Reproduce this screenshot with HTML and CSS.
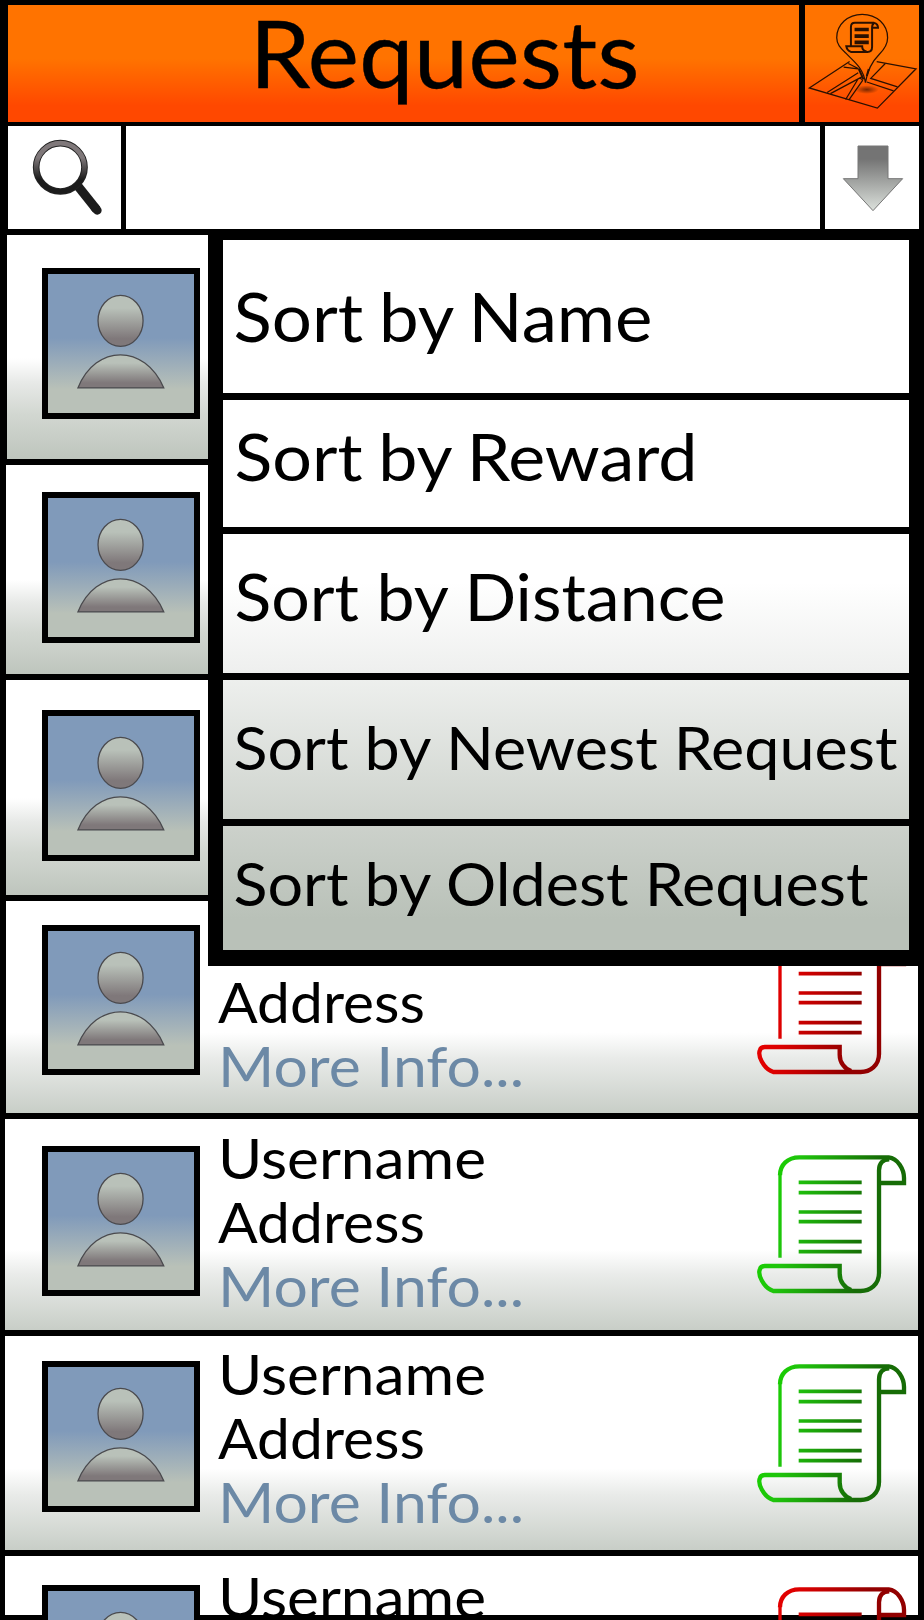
FILE: index.html
```html
<!DOCTYPE html>
<html lang="en">
<head>
<meta charset="utf-8">
<title>Requests</title>
<link rel="stylesheet" href="styles.css">
</head>
<body>
<svg class="defs" aria-hidden="true">
  <defs>
    <linearGradient id="skin" x1="0" y1="0" x2="0" y2="1"><stop offset=".25" stop-color="#b9c1b9"/><stop offset=".85" stop-color="#7f787a"/></linearGradient>
    <linearGradient id="green" gradientUnits="userSpaceOnUse" x1="130" y1="0" x2="440" y2="60"><stop offset="0" stop-color="#18d000"/><stop offset=".25" stop-color="#1fc40c"/><stop offset="1" stop-color="#166c06"/></linearGradient>
    <linearGradient id="red" gradientUnits="userSpaceOnUse" x1="130" y1="0" x2="440" y2="60"><stop offset="0" stop-color="#e60000"/><stop offset=".25" stop-color="#dc0000"/><stop offset=".9" stop-color="#920000"/></linearGradient>
    <linearGradient id="steel" x1="0" y1="0" x2="0" y2="1"><stop offset=".2" stop-color="#747474"/><stop offset="1" stop-color="#dce1dc"/></linearGradient>
    <linearGradient id="ring" x1="0" y1="0" x2="0" y2="1"><stop offset=".3" stop-color="#7f787a"/><stop offset=".75" stop-color="#1c1c1c"/></linearGradient>
    <radialGradient id="shade"><stop offset="0" stop-color="#5a1c00" stop-opacity=".8"/><stop offset="1" stop-color="#5a1c00" stop-opacity="0"/></radialGradient>
    <symbol id="person" viewBox="0 0 146 138">
      <ellipse cx="72.8" cy="46.5" rx="22.6" ry="25.6"/>
      <path d="M30 113.8C48 69.500 97 69.500 116.200 113.800Z"/>
    </symbol>
    <symbol id="scroll" viewBox="50 130 455 425">
      <path stroke-width="10" d="M122 444V195"/>
      <path stroke-width="13" d="M122 197C122 165 145 143 180 143H448C475 146 494 178 494 205V220H424"/>
      <path stroke-width="13" d="M450 149C430 149 419 162 419 182V490C419 525 392 544 364 544H102C72 534 54 494 62 478Q65 469 76 469H301V492C301 515 316 536 336 541"/>
      <path stroke-width="11" d="M178 218H367M178 249H367M178 307H367M178 336H367M178 396H367M178 426H367"/>
    </symbol>
  </defs>
</svg>

<main class="screen">
  <header class="header">
    <h1 class="title"><svg class="label" width="791" height="117"><text x="241.500" y="83" font-size="93.500" textLength="390" lengthAdjust="spacingAndGlyphs">Requests</text></svg></h1>
    <div class="map">
      <svg class="map-icon" viewBox="75 18 345 347" fill="none" stroke="#2a1000" stroke-width="3.800">
        <ellipse cx="262" cy="269" rx="36" ry="13" fill="url(#shade)" stroke="none"/>
        <path d="M210 184L88 264L294 325L411 206L292 184"/>
        <path d="M192 201L242 207M206 190L236 205M236 218L142 278M250 229L152 281M198 299L236 236Q247 233 249 242L208 300M318 190L274 235L355 261M262 246L343 273"/>
        <path d="M238 207L252 238M268 207L262 228" stroke-width="6"/>
        <path d="M258 248C250 200 222 184 198 158C182 143 171 131 171 112C171 72 205 41 248 41C292 41 325 72 325 112C325 136 311 151 300 162C278 184 263 214 258 248Z"/>
        <g stroke-width="6">
          <path d="M214 137V80Q214 67 226 67H284Q296 70 296 82H281M284 68Q278 70 278 82V140Q278 155 264 155H214Q202 150 200 138H248Q248 152 262 154"/>
          <path stroke-width="11" d="M225 87H268M225 107H268M225 126H268"/>
        </g>
      </svg>
    </div>
  </header>

  <div class="search">
    <div class="search-icon">
      <svg class="fill" viewBox="24 378 339 309">
        <path d="M232 556L290 629" stroke="#1c1c1c" stroke-width="27"/>
        <path d="M284 622L292 631" stroke="#1c1c1c" stroke-width="26" stroke-linecap="round"/>
        <circle cx="181" cy="502" r="72.500" fill="none" stroke="#222" stroke-width="20"/>
        <circle cx="181" cy="502" r="72.500" fill="none" stroke="url(#ring)" stroke-width="14"/>
      </svg>
    </div>
    <div class="search-input"></div>
    <div class="sort-button">
      <svg class="fill" viewBox="135 378 282 309"><path d="M234 438H324V536H368L279 632L190 536H234Z" fill="url(#steel)" stroke="#777" stroke-width="3"/></svg>
    </div>
  </div>

  <section class="list">
    <article class="row r1"><svg class="avatar"><use href="#person"/></svg></article>
    <article class="row r2"><svg class="avatar"><use href="#person"/></svg></article>
    <article class="row r3"><svg class="avatar"><use href="#person"/></svg></article>
    <article class="row r4">
      <svg class="avatar"><use href="#person"/></svg>
      <svg class="info" viewBox="210 0 340 212" font-size="56"><text x="218" y="121.700" textLength="207" lengthAdjust="spacingAndGlyphs">Address</text><text class="more" x="218" y="185.700" textLength="306" lengthAdjust="spacingAndGlyphs">More Info...</text></svg>
      <svg class="status" stroke="url(#red)"><use href="#scroll"/></svg>
    </article>
    <article class="row r5">
      <svg class="avatar"><use href="#person"/></svg>
      <svg class="info" viewBox="210 0 340 212" font-size="56"><text x="218" y="60" textLength="268" lengthAdjust="spacingAndGlyphs">Username</text><text x="218" y="124" textLength="207" lengthAdjust="spacingAndGlyphs">Address</text><text class="more" x="218" y="188" textLength="306" lengthAdjust="spacingAndGlyphs">More Info...</text></svg>
      <svg class="status" stroke="url(#green)"><use href="#scroll"/></svg>
    </article>
    <article class="row r6">
      <svg class="avatar"><use href="#person"/></svg>
      <svg class="info" viewBox="210 0 340 212" font-size="56"><text x="218" y="59" textLength="268" lengthAdjust="spacingAndGlyphs">Username</text><text x="218" y="123" textLength="207" lengthAdjust="spacingAndGlyphs">Address</text><text class="more" x="218" y="187" textLength="306" lengthAdjust="spacingAndGlyphs">More Info...</text></svg>
      <svg class="status" stroke="url(#green)"><use href="#scroll"/></svg>
    </article>
    <article class="row r7">
      <svg class="avatar"><use href="#person"/></svg>
      <svg class="info clipped" viewBox="210 0 340 59" font-size="56"><text x="218" y="62.300" textLength="268" lengthAdjust="spacingAndGlyphs">Username</text></svg>
      <svg class="status" stroke="url(#red)"><use href="#scroll"/></svg>
    </article>
  </section>

  <nav class="menu">
    <div class="option o1"><svg class="label" width="686" height="153"><text x="10.500" y="101.700" font-size="67" textLength="419" word-spacing="-2" lengthAdjust="spacingAndGlyphs">Sort by Name</text></svg></div>
    <div class="option o2"><svg class="label" width="686" height="127"><text x="11.500" y="81" font-size="66" textLength="463" word-spacing="-2" lengthAdjust="spacingAndGlyphs">Sort by Reward</text></svg></div>
    <div class="option o3"><svg class="label" width="686" height="139"><text x="11.500" y="86.700" font-size="65.500" textLength="491" lengthAdjust="spacingAndGlyphs">Sort by Distance</text></svg></div>
    <div class="option o4"><svg class="label" width="686" height="139"><text x="10.500" y="89.700" font-size="60" textLength="664" lengthAdjust="spacingAndGlyphs">Sort by Newest Request</text></svg></div>
    <div class="option o5"><svg class="label" width="686" height="124"><text x="10.500" y="80" font-size="60" textLength="635" lengthAdjust="spacingAndGlyphs">Sort by Oldest Request</text></svg></div>
  </nav>
</main>
</body>
</html>
```
FILE: styles.css
```css
* { box-sizing: border-box; }

html, body { margin: 0; background: #000; overflow: hidden; }

.defs { position: absolute; width: 0; height: 0; }

.screen {
  position: relative;
  width: 924px;
  height: 1620px;
  padding-top: 5px;
  overflow: hidden;
  font-family: Lato, "Open Sans", sans-serif;
}

svg { display: block; flex: none; }
text { fill: #000; }
.label, .info { overflow: visible; }
.clipped { overflow: hidden; }

.header, .search { display: flex; padding-left: 8px; }
.header { gap: 6px; height: 117px; }
.title, .map { background: linear-gradient(#ff7300, #ff7300 46%, #ff4800 86%); }
.title { width: 791px; margin: 0; font-weight: 400; }
.title text { stroke: #000; stroke-width: .3px; }
.map { width: 114px; }
.map-icon { width: 114px; height: 116px; margin-top: 1px; }

.search { height: 103px; margin-top: 4px; gap: 5px; }
.search > div { background: #fff; }
.search-icon { width: 113px; }
.search-input { width: 694px; }
.sort-button { width: 94px; }
.fill { width: 100%; height: 100%; }

.list { display: flex; flex-direction: column; gap: 6px; margin-top: 6px; }
.row {
  display: flex;
  align-items: flex-start;
  flex: none;
  width: 912px;
  margin-left: 5.500px;
  padding-left: 36.500px;
  background: linear-gradient(#fff 55%, #e7e9e7 66%, #d2d7d1 80%, #bec5bd);
}
.r1 { height: 224px; margin-left: 7px; padding-left: 35px; --photo: 33.300px; }
.r2 { height: 209px; --photo: 27.200px; }
.r3 { height: 215px; --photo: 30.300px; }
.r4 { height: 212px; --photo: 23.700px; --scroll: 32.900px; }
.r5 { height: 211px; --photo: 26.700px; --scroll: 34px; }
.r6 { height: 214px; --photo: 25.200px; --scroll: 26px; }
.r7 { height: 59px; --photo: 29.300px; --scroll: 29px; background: #fff; }
.r4, .r5, .r6 { background: linear-gradient(#fff 62%, #e9ebe9 74%, #c8cec7); }
.r5, .r6, .r7 { width: 913px; margin-left: 4.500px; padding-left: 37.500px; }

.avatar {
  width: 157.500px;
  height: 150.500px;
  margin-top: var(--photo);
  border: 6px solid #000;
  background: linear-gradient(#809aba 46%, #b9c1b8 83%);
  fill: url(#skin);
  stroke: #4a4a4e;
  stroke-width: 1.300;
}
.info { width: 340px; height: auto; margin-left: 10.500px; }
text.more { fill: #6c89a6; }
.status {
  width: 151.700px;
  height: 141.700px;
  margin: var(--scroll) 0 0 206.200px;
  fill: none;
}

/* Sort menu, opened over the request list */
.menu {
  position: absolute;
  left: 208px;
  top: 235px;
  width: 712px;
  height: 731px;
  padding: 5px 11px 16px 15px;
  background: #000;
  display: flex;
  flex-direction: column;
}
.option { flex: none; width: 686px; background: #fff; }
.option + .option { margin-top: 7px; }
.o1 { height: 153px; }
.o2 { height: 127px; }
.o3 { height: 139px; background: linear-gradient(#fff 35%, #eeefee); }
.o4 { height: 139px; background: linear-gradient(#edefed, #ced3cd); }
.o5 { height: 124px; background: linear-gradient(#ccd1cb, #b9c1b8 75%); }
```
